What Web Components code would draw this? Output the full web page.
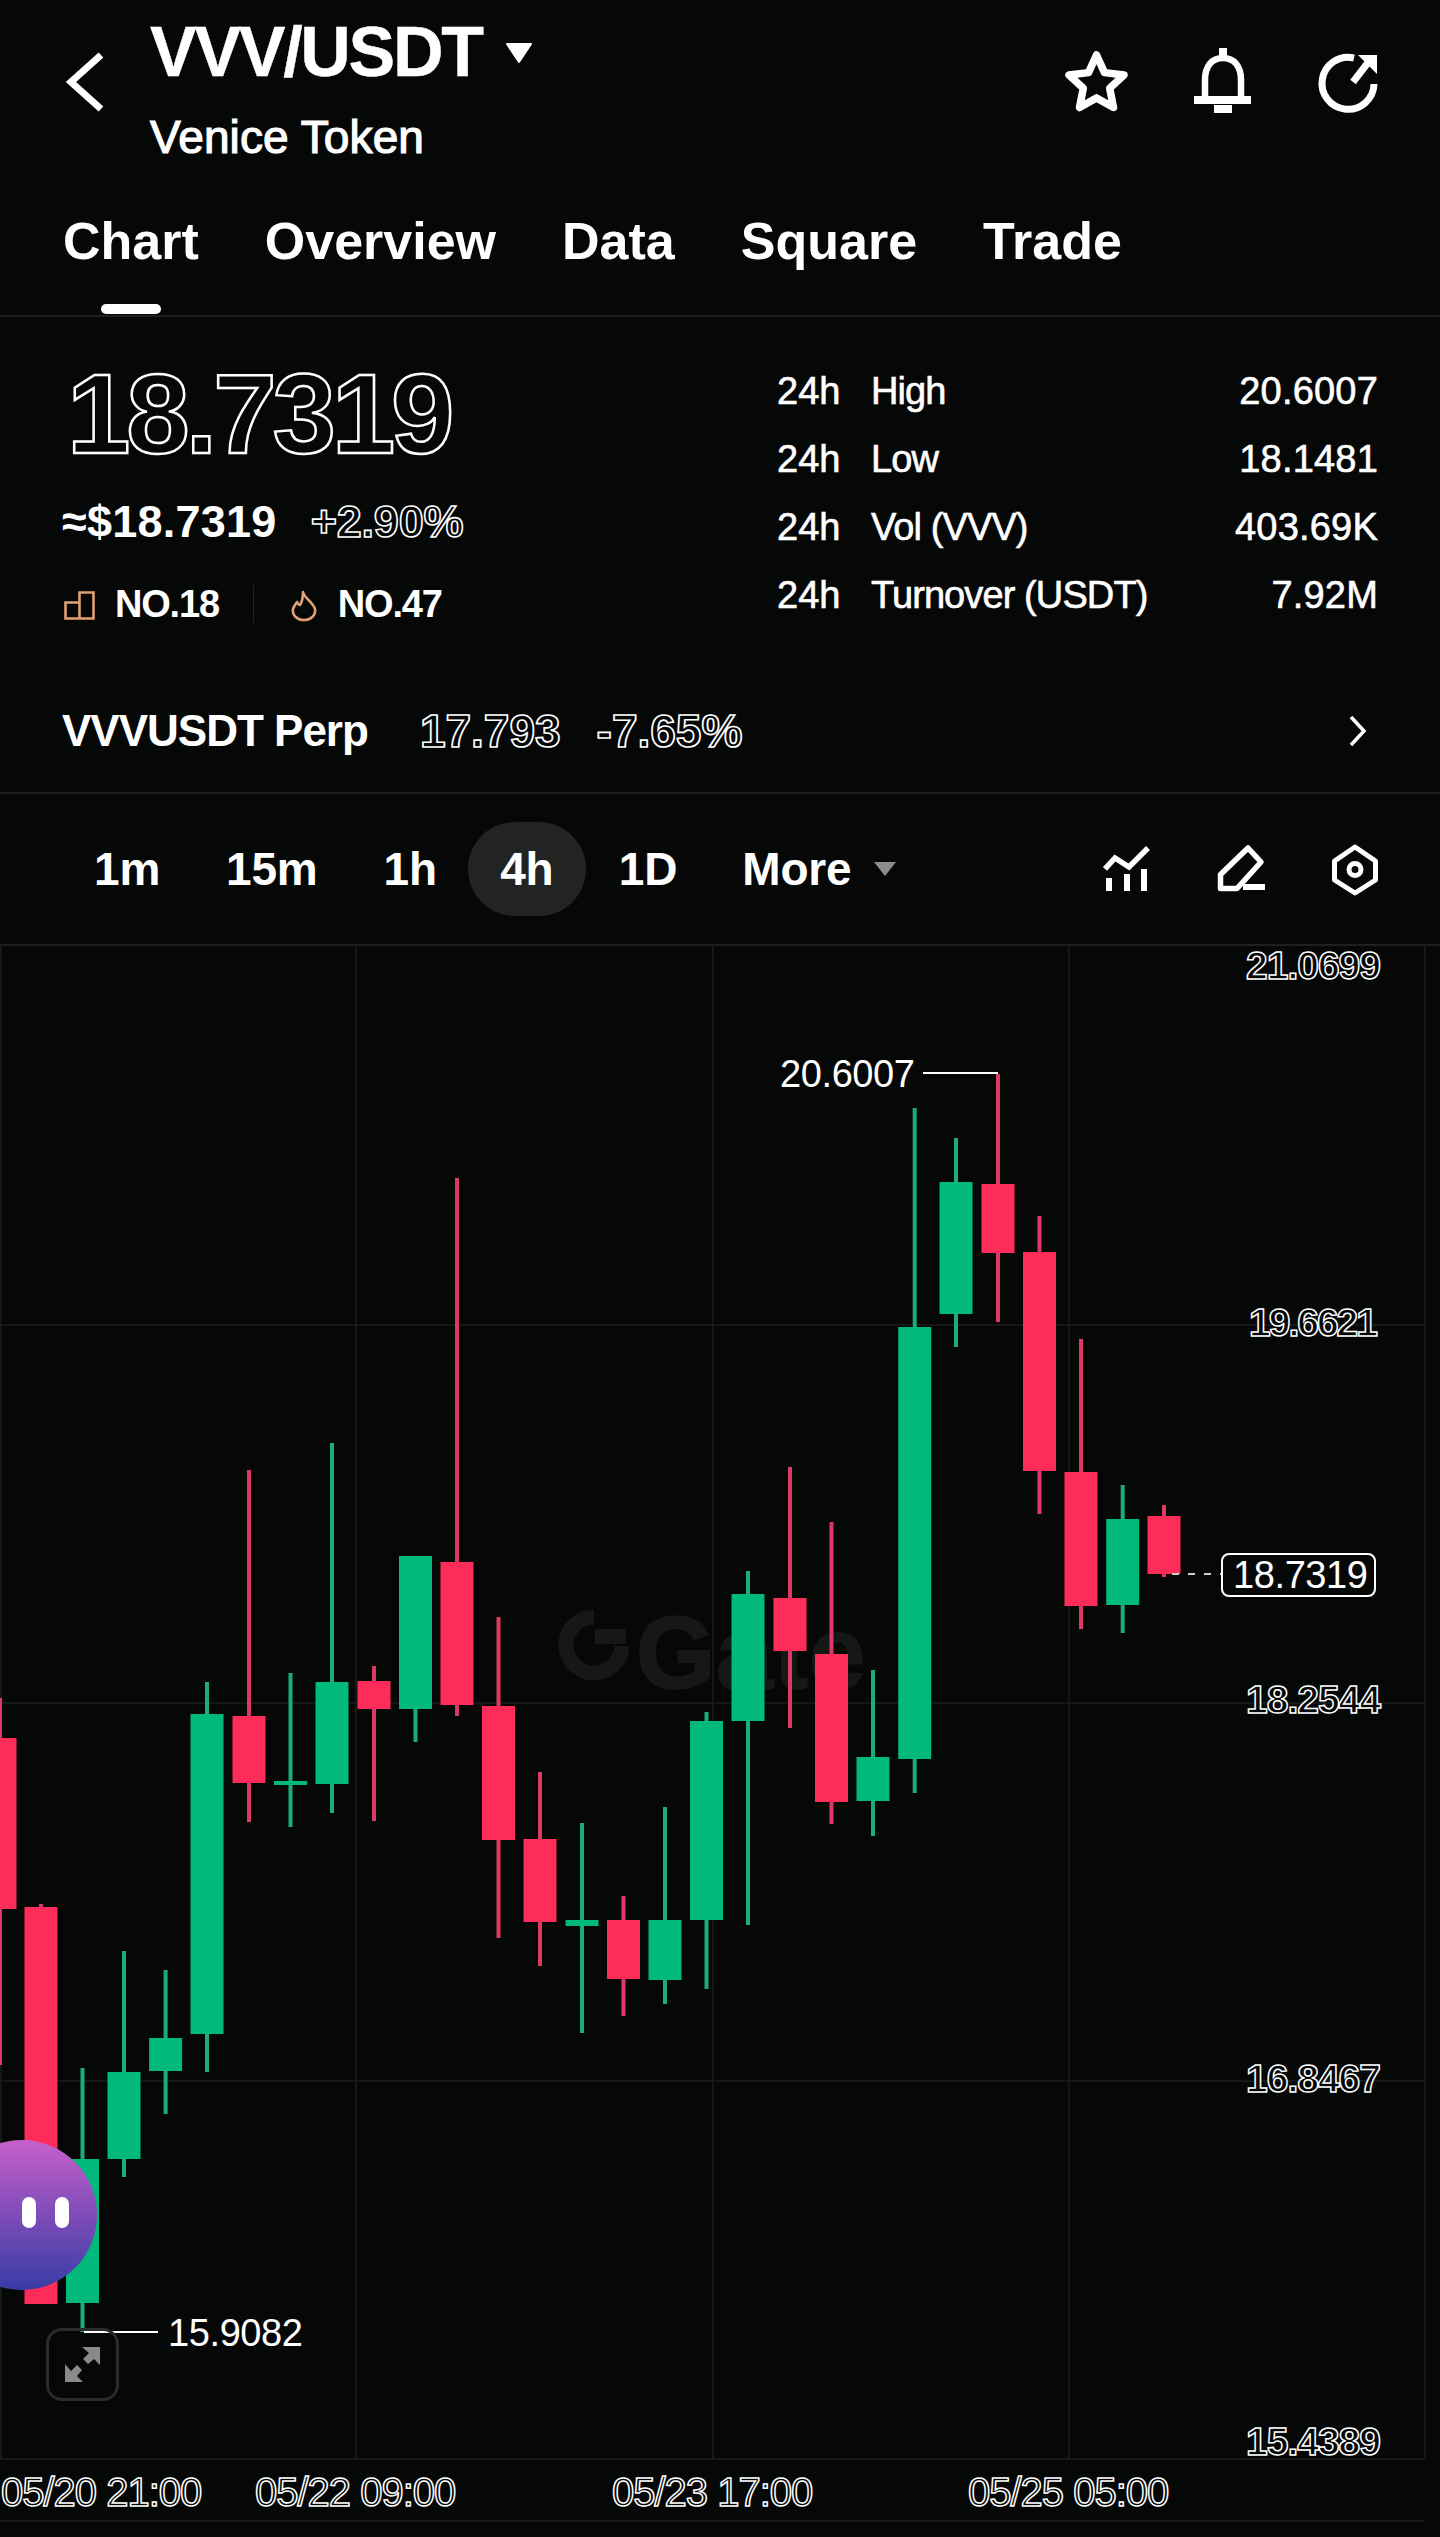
<!DOCTYPE html>
<html lang="en"><head><meta charset="utf-8"><title>VVV/USDT</title>
<style>
html,body{margin:0;padding:0;background:#060808;}
body{width:1440px;height:2537px;overflow:hidden;font-family:"Liberation Sans",Arial,sans-serif;color:#fff;}
</style></head>
<body>
<app-header></app-header>
<tab-bar><tab-item active>Chart</tab-item><tab-item>Overview</tab-item><tab-item>Data</tab-item><tab-item>Square</tab-item><tab-item>Trade</tab-item></tab-bar>
<price-panel>
  <stat-row slot="stats" label="High" value="20.6007"></stat-row>
  <stat-row slot="stats" label="Low" value="18.1481"></stat-row>
  <stat-row slot="stats" label="Vol (VVV)" value="403.69K"></stat-row>
  <stat-row slot="stats" label="Turnover (USDT)" value="7.92M"></stat-row>
</price-panel>
<perp-row></perp-row>
<interval-bar></interval-bar>
<kline-chart></kline-chart>
<script>
const define=(name,css,html)=>{
  customElements.define(name,class extends HTMLElement{
    constructor(){super();const r=this.attachShadow({mode:'open'});
      r.innerHTML='<style>'+css+'</style>'+(typeof html==='function'?html(this):html);}
  });
};
define('app-header',`
:host{display:flex;height:190px;box-sizing:border-box;padding:12px 0 0 0;position:relative;}
.back{width:150px;flex:none;}
.back svg{display:block;margin:40px 0 0 65px;}
.t{flex:1;}
.title{display:flex;align-items:flex-start;font-weight:700;font-size:70px;line-height:80px;letter-spacing:-2.3px;white-space:nowrap;-webkit-text-stroke:.4px #fff;}
.title svg{margin:30px 0 0 22px;}
.sub{margin-top:20px;font-size:46px;line-height:50px;letter-spacing:.1px;-webkit-text-stroke:1.2px #fff;}
.icons{flex:none;width:384px;height:80px;margin-top:34px;display:flex;}
.icons svg{display:block;position:static;}
`,`
<div class="back"><svg width="42" height="60" viewBox="0 0 42 60"><path d="M36 3 L6 30 L36 57" fill="none" stroke="#fff" stroke-width="7"/></svg></div>
<div class="t"><div class="title"><span>VVV/USDT</span><svg width="30" height="22" viewBox="0 0 30 22"><path d="M3 2H27L15 20Z" fill="#fff" stroke="#fff" stroke-width="2" stroke-linejoin="round"/></svg></div><div class="sub">Venice Token</div></div>
<div class="icons"><svg width="384" height="80" viewBox="1056 46 384 80">
<path d="M1096.5 55l8 17.6 19.5 2.4-14.3 13.3 3.8 19.2-17-9.6-17 9.6 3.8-19.2L1069 75l19.5-2.4z" fill="none" stroke="#fff" stroke-width="7.5" stroke-linejoin="round"/>
<path d="M1219 48h8v10h-8z M1194 96h57v8h-57z M1214 105h18v8h-18z" fill="#fff"/>
<path d="M1205 98V80c0-14 7-22 18-22s18 8 18 22v18" fill="none" stroke="#fff" stroke-width="6.5"/>
<path d="M1354 58A26 26 0 1 0 1374 84" fill="none" stroke="#fff" stroke-width="7"/>
<path d="M1353 82L1370 60" fill="none" stroke="#fff" stroke-width="7"/>
<path d="M1358 55H1377V74Z" fill="#fff"/>
</svg></div>
`);
define('tab-bar',`:host{display:flex;box-sizing:border-box;height:127px;padding:21px 0 0 63px;gap:66px;border-bottom:2px solid #1e2020;}`,`<slot></slot>`);
define('tab-item',`
:host{display:block;position:relative;height:104px;font-weight:700;font-size:52px;line-height:60px;white-space:nowrap;}
:host([active])::after{content:"";position:absolute;left:38px;width:60px;height:10px;top:93px;border-radius:5px;background:#fff;}
`,`<slot></slot>`);
define('price-panel',`
:host{display:flex;height:359px;box-sizing:border-box;justify-content:space-between;}
.l{padding:40px 0 0 62px;}
.price{font-weight:700;font-size:114px;line-height:114px;letter-spacing:-4.1px;color:#060808;-webkit-text-stroke:2.5px #fff;margin-left:5px;}
.usd{display:flex;margin-top:28px;font-size:45px;line-height:45px;font-weight:700;gap:34px;letter-spacing:.25px;}
.usd .o{color:#060808;-webkit-text-stroke:1.6px #fff;letter-spacing:-.2px;}
.rank{display:flex;align-items:center;margin-top:41px;font-weight:700;font-size:38px;line-height:38px;letter-spacing:-1.2px;}
.rank svg{display:block;flex:none;}
.div{width:1px;height:38px;background:#222;margin:0 36px 0 34px;}
.r{width:601px;margin-right:62px;padding-top:55px;display:flex;flex-direction:column;gap:30px;}
`,`
<div class="l"><div class="price">18.7319</div>
<div class="usd"><span>≈$18.7319</span><span class="o">+2.90%</span></div>
<div class="rank"><svg width="32" height="30" viewBox="0 0 32 30" style="margin:2px 19px 0 2px"><path d="M1.5 12.5h14v16h-14z M15.5 28.5V2.5h14v26z" fill="none" stroke="#e2a173" stroke-width="2.6"/></svg><span>NO.18</span><span class="div"></span><svg width="28" height="32" viewBox="0 0 28 32" style="margin:4px 20px 0 0"><path d="M13 2c1 6 10 10 12 17 1 6-4 11-11 11S2 25 3 19c1-3 3-5 4-7 1 2 2 3 3 3 2-3 3-8 3-13z" fill="none" stroke="#e2a173" stroke-width="2.6" stroke-linejoin="round"/></svg><span>NO.47</span></div></div>
<div class="r"><slot name="stats"></slot></div>
`);
define('stat-row',`
:host{display:flex;font-size:38px;line-height:38px;white-space:nowrap;-webkit-text-stroke:.6px #fff;}
.h{width:94px;flex:none;}.n{flex:1;letter-spacing:-.9px;}.v{letter-spacing:.2px;}
`,el=>`<span class="h">24h</span><span class="n">${el.getAttribute('label')}</span><span class="v">${el.getAttribute('value')}</span>`);
define('perp-row',`
:host{display:flex;align-items:center;height:118px;box-sizing:border-box;border-bottom:2px solid #1e2020;padding:0 73px 6px 62px;white-space:nowrap;}
.a{font-weight:700;font-size:44px;letter-spacing:-1px;}
.o{font-weight:700;font-size:46px;color:#060808;-webkit-text-stroke:1.7px #fff;}
.p{margin-left:52px}.q{margin-left:36px;flex:1}
`,`<span class="a">VVVUSDT Perp</span><span class="o p">17.793</span><span class="o q">-7.65%</span><svg width="18" height="32" viewBox="0 0 18 32"><path d="M2 2L15 16L2 30" fill="none" stroke="#fff" stroke-width="3.5"/></svg>`);
define('interval-bar',`
:host{display:flex;align-items:center;height:152px;box-sizing:border-box;border-bottom:2px solid #1e2020;padding-left:61px;white-space:nowrap;font-weight:700;font-size:46px;letter-spacing:-.2px;}
.i{display:flex;align-items:center;justify-content:center;height:94px;padding:0 33px;box-sizing:border-box;}
.on{background:#222423;border-radius:47px;width:118px;padding:0;}
.more svg{margin-left:22px;}
.sp{flex:1}
.ic{display:block;}
`,`<span class="i">1m</span><span class="i">15m</span><span class="i" style="padding-right:31px">1h</span><span class="i on">4h</span><span class="i">1D</span><span class="i more" style="padding-left:32px;padding-right:0">More<svg width="24" height="16" viewBox="0 0 24 16"><path d="M1 1H23L12 15Z" fill="#8c8c8c"/></svg></span><span class="sp"></span>
<svg class="ic" width="337" height="60" viewBox="1103 838 337 60">
<path d="M1105 868L1115 857L1129 866L1148 847" fill="none" stroke="#fff" stroke-width="5.5"/>
<path d="M1106 877h6v13h-6z M1124 873h6v17h-6z M1141 868h6v22h-6z" fill="#fff"/>
<path d="M1248 847L1261 861L1237 887.5H1220.5V873.5Z" fill="none" stroke="#fff" stroke-width="5.5" stroke-linejoin="round"/>
<path d="M1243 883h22v6h-22z" fill="#fff"/>
<path d="M1355 846L1375.5 860V879L1355 892L1334.5 879V860Z" fill="none" stroke="#fff" stroke-width="5" stroke-linejoin="round"/>
<circle cx="1355" cy="868.5" r="6" fill="none" stroke="#fff" stroke-width="5"/>
</svg>`);
const C=[
[0,'r',1698,1738,1909,2065],[41,'r',1904,1907,2304,2304],[82.5,'g',2068,2159,2303,2332],[124,'g',1951,2072,2159,2177],
[165.6,'g',1970,2038,2071,2114],[207,'g',1682,1714,2034,2072],[249,'r',1470,1716,1783,1822],[290.5,'g',1673,1781,1785,1827],
[332,'g',1443,1682,1784,1813],[374,'r',1666,1681,1709,1821],[415.5,'g',1556,1556,1709,1742],[457,'r',1178,1562,1705,1716],
[498.5,'r',1617,1706,1840,1938],[540,'r',1772,1839,1922,1966],[582,'g',1823,1920,1926,2033],[623.5,'r',1896,1920,1979,2016],
[665,'g',1807,1920,1980,2004],[706.5,'g',1712,1721,1920,1989],[748,'g',1571,1594,1721,1925],[790,'r',1467,1598,1651,1728],
[831.5,'r',1522,1654,1802,1824],[873,'g',1670,1757,1801,1836],[914.7,'g',1108,1327,1759,1793],[956,'g',1138,1182,1314,1347],
[998,'r',1074,1184,1253,1322],[1039.5,'r',1216,1252,1471,1514],[1081,'r',1339,1472,1606,1629],[1122.7,'g',1485,1519,1605,1633],[1164,'r',1505,1516,1574,1577]];
const col={r:['#fe2c59','#dc3a60'],g:['#02b97c','#1aab7e']};
const Y0=946;
const lab=(t,x,base,f,cls,right,st)=>`<span class="${cls}" style="${right?`right:${1440-x}px`:`left:${x}px`};top:${base-Y0-.8465*f}px;font-size:${f}px;line-height:${f}px;${st||''}">${t}</span>`;
let svg='';
[1325,1703,2081].forEach(y=>svg+=`<path d="M0 ${y}H1425" stroke="#1c1e1e" stroke-width="1.5"/>`);
[1,356,713,1069,1425].forEach(x=>svg+=`<path d="M${x} 946V2459" stroke="#1c1e1e" stroke-width="1.5"/>`);
svg+=`<path d="M0 2459H1425M0 2521H1425" stroke="#1c1e1e" stroke-width="1.5"/>`;
let logo=`<path d="M594 1617A28 28 0 1 0 622 1646" fill="none" stroke="#161818" stroke-width="15"/><path d="M595 1629H626V1644H595Z" fill="#161818"/>`;
let candles='';
C.forEach(([x,c,wt,bt,bb,wb])=>{
  candles+=`<rect x="${x-2}" y="${wt}" width="4" height="${wb-wt}" fill="${col[c][1]}"/><rect x="${x-16.5}" y="${bt}" width="33" height="${bb-bt}" fill="${col[c][0]}"/>`;
});
define('kline-chart',`
:host{display:block;position:relative;height:1591px;}
svg.c{display:block;}
span{position:absolute;white-space:nowrap;}
.ax{font-weight:700;color:#060808;-webkit-text-stroke:1.5px #fff;letter-spacing:-1px;}
.dt{font-weight:400;color:#060808;-webkit-text-stroke:1.5px #fff;letter-spacing:-1px;}
.an{color:#fff;letter-spacing:-.4px;}
.wm{font-weight:700;color:#161818;letter-spacing:1px;-webkit-text-stroke:2px #161818;}
.box{position:absolute;left:1221px;top:${1553-Y0}px;width:155px;height:44px;box-sizing:border-box;border:2px solid #fff;border-radius:8px;background:#060808;}
.blob{position:absolute;left:-53px;top:${2140-Y0}px;width:150px;height:150px;border-radius:50%;background:linear-gradient(180deg,#c660cb 0%,#7e4cb8 50%,#3a3ca6 100%);display:flex;}
.eye{position:absolute;top:57px;width:14px;height:31px;border-radius:7px;background:#fff;}
.exp{position:absolute;left:46px;top:${2328-Y0}px;width:73px;height:73px;box-sizing:border-box;border:3px solid #2a2c2c;border-radius:16px;}
`,`<span class="wm" style="left:636px;top:${1602-Y0}px;font-size:102px;line-height:102px">Gate</span>
<svg class="c" width="1440" height="1591" viewBox="0 946 1440 1591" style="position:relative">${svg}${logo}${candles}
<path d="M923 1073H998" stroke="#fff" stroke-width="2"/>
<path d="M84 2332H158" stroke="#fff" stroke-width="2"/>
<path d="M1172 1574H1221" stroke="#ccc" stroke-width="2" stroke-dasharray="7 9"/>
</svg>
${lab('21.0699',1380,979,39,'ax',1)}${lab('19.6621',1376,1336,39,'ax',1,'letter-spacing:-2px')}${lab('18.2544',1380,1713,39,'ax',1)}${lab('16.8467',1380,2092,39,'ax',1)}${lab('15.4389',1380,2455,39,'ax',1)}
${lab('05/20 21:00',1,2506,40,'dt')}${lab('05/22 09:00',255,2506,40,'dt')}${lab('05/23 17:00',612,2506,40,'dt')}${lab('05/25 05:00',968,2506,40,'dt')}
${lab('20.6007',780,1087,38,'an')}${lab('15.9082',168,2346,38,'an')}
<div class="box"></div>${lab('18.7319',1233,1588,38,'an')}
<div class="exp"><svg width="67" height="67" viewBox="0 0 67 67"><path d="M51 16V34L45 28L39 33L34 28L40 22L33 16Z M16 51V33L22 40L28 34L33 39L28 45L34 51Z" fill="#8a8a8a"/></svg></div>
<div class="blob"><i class="eye" style="left:75px"></i><i class="eye" style="left:108px"></i></div>`);
</script>
</body></html>
